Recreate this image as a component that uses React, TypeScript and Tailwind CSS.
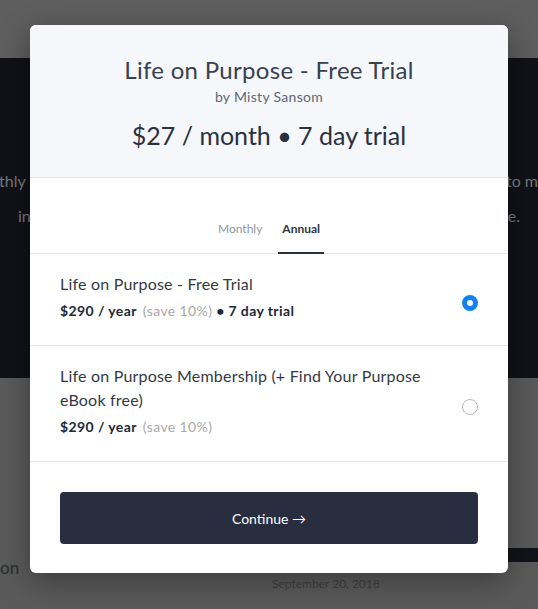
import React, { useState } from 'react';

type Plan = {
  id: string;
  title: string;
  price: string;
  save: string;
  trial?: string;
};

const plans: Plan[] = [
  { id: 'trial', title: 'Life on Purpose - Free Trial', price: '$290 / year', save: '(save 10%)', trial: '7 day trial' },
  { id: 'member', title: 'Life on Purpose Membership (+ Find Your Purpose eBook free)', price: '$290 / year', save: '(save 10%)' },
];

const Radio = ({ checked }: { checked: boolean }) =>
  checked ? (
    <span className="mt-[12px] block h-4 w-4 shrink-0 rounded-full border-[5px] border-[#1282f0] bg-white" />
  ) : (
    <span className="mt-[12px] block h-4 w-4 shrink-0 rounded-full border border-[#b8b8b8] bg-white" />
  );

export default function App() {
  const [tab, setTab] = useState<'monthly' | 'annual'>('annual');
  const [selected, setSelected] = useState('trial');

  return (
    <div className="relative h-[609px] w-[538px] overflow-hidden bg-[#5a5a5a] font-['Lato','Noto_Sans',sans-serif]">
      {/* dimmed page behind the modal */}
      <div className="h-[58px] bg-[#5e5e5e]" />
      <div className="flex h-[320px] flex-col bg-[#111218] pt-[105px] text-[16px] leading-[35px] text-[#77787d]">
        <div className="flex justify-between">
          <span className="-ml-px">thly</span>
          <span>to m</span>
        </div>
        <div className="flex justify-between pl-[18px] pr-[18px]">
          <span>in</span>
          <span>e.</span>
        </div>
      </div>
      <div className="flex pt-[170px]">
        <div className="flex w-[445px]">
          <span className="mt-[8px] w-[272px] text-[17px] leading-[24px] text-[#2c2c2c]">on</span>
          <span className="mt-[28px] text-[12px] leading-[16px] text-[#3f3f3f]">September 20, 2018</span>
        </div>
        <div className="flex w-[93px] flex-col">
          <div className="h-[14px] bg-[#121318]" />
        </div>
      </div>

      {/* modal */}
      <div className="absolute left-[30px] top-[25px] w-[478px] overflow-hidden rounded-md bg-white shadow-[0_8px_30px_rgba(0,0,0,0.35)]">
        <div className="flex h-[153px] flex-col items-center border-b border-[#e2e6ec] bg-[#f5f7fb] pt-[31px]">
          <h1 className="text-[24px] leading-[28px] tracking-[0.3px] text-[#374150]">Life on Purpose - Free Trial</h1>
          <p className="mt-[4px] text-[14px] leading-[18px] tracking-[0.3px] text-[#5f6873]">by Misty Sansom</p>
          <p className="mt-[13px] text-[25px] leading-[32px] text-[#2a3140]">$27 / month • 7 day trial</p>
        </div>

        <div className="flex justify-center gap-[12px] border-b border-[#e6e8eb] pt-[43px]">
          <button
            onClick={() => setTab('monthly')}
            className={
              tab === 'monthly'
                ? '-mb-px border-b-2 border-[#2a2f3d] px-[4px] pb-[15px] text-[12px] font-bold leading-[16px] text-[#2f3540]'
                : '-mb-px border-b-2 border-transparent px-[4px] pb-[15px] text-[12px] leading-[16px] text-[#8c979f]'
            }
          >
            Monthly
          </button>
          <button
            onClick={() => setTab('annual')}
            className={
              tab === 'annual'
                ? '-mb-px border-b-2 border-[#2a2f3d] px-[4px] pb-[15px] text-[12px] font-bold leading-[16px] text-[#2f3540]'
                : '-mb-px border-b-2 border-transparent px-[4px] pb-[15px] text-[12px] leading-[16px] text-[#8c979f]'
            }
          >
            Annual
          </button>
        </div>

        {plans.map((p) => (
          <div
            key={p.id}
            onClick={() => setSelected(p.id)}
            className="flex cursor-pointer items-center justify-between gap-6 border-b border-[#e6e8eb] px-[30px] pb-[24px] pt-[18px]"
          >
            <div className="max-w-[380px]">
              <div className="text-[16px] leading-[24px] tracking-[0.2px] text-[#333a44]">{p.title}</div>
              <div className="mt-[5px] text-[14px] leading-[20px] tracking-[0.4px] text-[#222936]">
                <span className="font-bold">{p.price}</span>
                <span className="ml-[6px] text-[#a9a9a9]">{p.save}</span>
                {p.trial && (
                  <>
                    <span className="font-bold"> • </span>
                    <span className="font-bold">{p.trial}</span>
                  </>
                )}
              </div>
            </div>
            <Radio checked={selected === p.id} />
          </div>
        ))}

        <div className="px-[30px] pb-[29px] pt-[30px]">
          <button className="flex h-[52px] w-full items-center justify-center rounded-[4px] bg-[#282d40] text-[14px] text-white">
            Continue →
          </button>
        </div>
      </div>
    </div>
  );
}
